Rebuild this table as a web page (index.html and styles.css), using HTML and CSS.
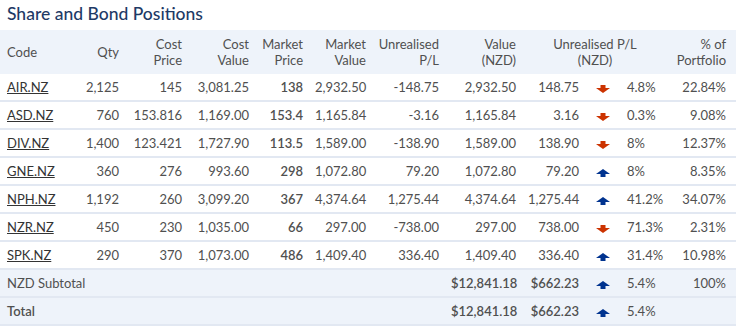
FILE: index.html
```html
<!DOCTYPE html>
<html lang="en">
<head>
    <meta charset="UTF-8">
    <title>Share and Bond Positions</title>
    <link rel="stylesheet" href="styles.css">
</head>
<body>
    <h2 class="title">Share and Bond Positions</h2>

    <table class="positions">
        <colgroup>
            <col style="width: 70px">
            <col style="width: 55px">
            <col style="width: 63px">
            <col style="width: 67px">
            <col style="width: 54px">
            <col style="width: 63px">
            <col style="width: 73px">
            <col style="width: 77px">
            <col style="width: 63px">
            <col style="width: 36px">
            <col style="width: 47px">
            <col style="width: 68px">
        </colgroup>
        <thead>
            <tr>
                <th class="left">Code</th>
                <th>Qty</th>
                <th>Cost<br>Price</th>
                <th>Cost<br>Value</th>
                <th>Market<br>Price</th>
                <th>Market<br>Value</th>
                <th>Unrealised<br>P/L</th>
                <th>Value<br>(NZD)</th>
                <th colspan="3" class="center">Unrealised P/L<br>(NZD)</th>
                <th class="last">% of<br>Portfolio</th>
            </tr>
        </thead>
        <tbody>
            <tr>
                <td class="left"><a href="#">AIR.NZ</a></td>
                <td>2,125</td><td>145</td><td>3,081.25</td><td class="strong">138</td><td>2,932.50</td>
                <td>-148.75</td><td>2,932.50</td><td>148.75</td>
                <td class="arrow"><svg class="down" viewBox="0 0 14 8"><rect x="4.5" y="0" width="5" height="3"/><polygon points="0,3 14,3 7,8"/></svg></td>
                <td class="pct">4.8%</td><td class="last">22.84%</td>
            </tr>
            <tr>
                <td class="left"><a href="#">ASD.NZ</a></td>
                <td>760</td><td>153.816</td><td>1,169.00</td><td class="strong">153.4</td><td>1,165.84</td>
                <td>-3.16</td><td>1,165.84</td><td>3.16</td>
                <td class="arrow"><svg class="down" viewBox="0 0 14 8"><rect x="4.5" y="0" width="5" height="3"/><polygon points="0,3 14,3 7,8"/></svg></td>
                <td class="pct">0.3%</td><td class="last">9.08%</td>
            </tr>
            <tr>
                <td class="left"><a href="#">DIV.NZ</a></td>
                <td>1,400</td><td>123.421</td><td>1,727.90</td><td class="strong">113.5</td><td>1,589.00</td>
                <td>-138.90</td><td>1,589.00</td><td>138.90</td>
                <td class="arrow"><svg class="down" viewBox="0 0 14 8"><rect x="4.5" y="0" width="5" height="3"/><polygon points="0,3 14,3 7,8"/></svg></td>
                <td class="pct">8%</td><td class="last">12.37%</td>
            </tr>
            <tr>
                <td class="left"><a href="#">GNE.NZ</a></td>
                <td>360</td><td>276</td><td>993.60</td><td class="strong">298</td><td>1,072.80</td>
                <td>79.20</td><td>1,072.80</td><td>79.20</td>
                <td class="arrow"><svg class="up" viewBox="0 0 14 8"><polygon points="0,5 14,5 7,0"/><rect x="4.5" y="5" width="5" height="3"/></svg></td>
                <td class="pct">8%</td><td class="last">8.35%</td>
            </tr>
            <tr>
                <td class="left"><a href="#">NPH.NZ</a></td>
                <td>1,192</td><td>260</td><td>3,099.20</td><td class="strong">367</td><td>4,374.64</td>
                <td>1,275.44</td><td>4,374.64</td><td>1,275.44</td>
                <td class="arrow"><svg class="up" viewBox="0 0 14 8"><polygon points="0,5 14,5 7,0"/><rect x="4.5" y="5" width="5" height="3"/></svg></td>
                <td class="pct">41.2%</td><td class="last">34.07%</td>
            </tr>
            <tr>
                <td class="left"><a href="#">NZR.NZ</a></td>
                <td>450</td><td>230</td><td>1,035.00</td><td class="strong">66</td><td>297.00</td>
                <td>-738.00</td><td>297.00</td><td>738.00</td>
                <td class="arrow"><svg class="down" viewBox="0 0 14 8"><rect x="4.5" y="0" width="5" height="3"/><polygon points="0,3 14,3 7,8"/></svg></td>
                <td class="pct">71.3%</td><td class="last">2.31%</td>
            </tr>
            <tr>
                <td class="left"><a href="#">SPK.NZ</a></td>
                <td>290</td><td>370</td><td>1,073.00</td><td class="strong">486</td><td>1,409.40</td>
                <td>336.40</td><td>1,409.40</td><td>336.40</td>
                <td class="arrow"><svg class="up" viewBox="0 0 14 8"><polygon points="0,5 14,5 7,0"/><rect x="4.5" y="5" width="5" height="3"/></svg></td>
                <td class="pct">31.4%</td><td class="last">10.98%</td>
            </tr>
            <tr class="sum">
                <td class="left" colspan="2">NZD Subtotal</td>
                <td colspan="5"></td>
                <td class="strong">$12,841.18</td><td class="strong">$662.23</td>
                <td class="arrow"><svg class="up" viewBox="0 0 14 8"><polygon points="0,5 14,5 7,0"/><rect x="4.5" y="5" width="5" height="3"/></svg></td>
                <td class="pct">5.4%</td><td class="last">100%</td>
            </tr>
            <tr class="sum">
                <td class="left strong" colspan="2">Total</td>
                <td colspan="5"></td>
                <td class="strong">$12,841.18</td><td class="strong">$662.23</td>
                <td class="arrow"><svg class="up" viewBox="0 0 14 8"><polygon points="0,5 14,5 7,0"/><rect x="4.5" y="5" width="5" height="3"/></svg></td>
                <td class="pct">5.4%</td><td class="last"></td>
            </tr>
        </tbody>
    </table>
</body>
</html>
```

FILE: styles.css
```css
:root {
    --title-color: #1e3a66;
    --text-color: #505050;
    --band-color: #eef3fa;
    --line-color: #e2e8f2;
    --down-color: #cc3300;
    --up-color: #00338f;
}

body {
    margin: 0;
    font-family: 'Lato', 'Open Sans', sans-serif;
    color: var(--text-color);
    background: #ffffff;
}

.title {
    margin: 0;
    padding: 4px 7px 0;
    height: 26px;
    font-size: 17.5px;
    line-height: 20px;
    font-weight: 500;
    color: var(--title-color);
}

.positions {
    width: 736px;
    border-collapse: collapse;
    table-layout: fixed;
    font-size: 13px;
}

.positions th {
    background: var(--band-color);
    font-weight: 400;
    text-align: right;
    line-height: 16px;
    padding: 6px 6px;
    vertical-align: middle;
}

.positions td {
    text-align: right;
    height: 26px;
    padding: 0 6px;
    border-bottom: 2px solid var(--line-color);
    white-space: nowrap;
}

.positions .left {
    text-align: left;
    padding-left: 7px;
}

.positions .center {
    text-align: center;
}

.positions .last {
    padding-right: 10px;
}

.positions td.pct {
    text-align: left;
}

.positions td.arrow {
    text-align: center;
    padding: 0;
}

.positions a {
    color: #333333;
    text-decoration: underline;
}

.strong {
    font-weight: 600;
}

.sum td {
    background: var(--band-color);
}

.arrow svg {
    width: 14px;
    height: 8px;
    vertical-align: middle;
}

.arrow .down {
    fill: var(--down-color);
}

.arrow .up {
    fill: var(--up-color);
}
```
